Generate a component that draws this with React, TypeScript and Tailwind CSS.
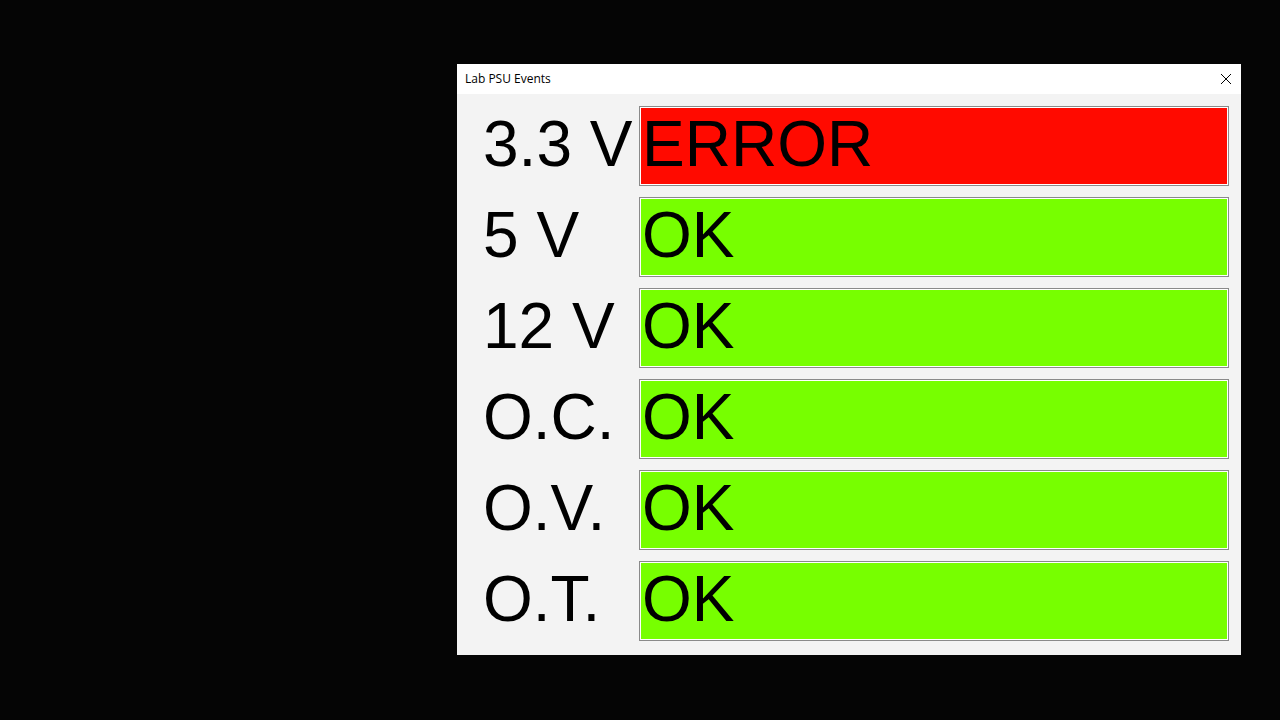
import React from 'react';

const rows = [
    { label: '3.3 V', status: 'ERROR', ok: false },
    { label: '5 V', status: 'OK', ok: true },
    { label: '12 V', status: 'OK', ok: true },
    { label: 'O.C.', status: 'OK', ok: true },
    { label: 'O.V.', status: 'OK', ok: true },
    { label: 'O.T.', status: 'OK', ok: true },
];

export default function App() {
    return (
        <div className="w-[1280px] h-[720px] bg-[#050505] pt-[64px] pl-[457px]">
            <div className="w-[784px] h-[591px] flex flex-col bg-[#f3f3f3]">
                <div className="h-[30px] bg-white flex flex-row items-center pl-[8px] pr-[9px]">
                    <div className="flex-1 text-[12px] text-black font-['Open_Sans',sans-serif]">
                        Lab PSU Events
                    </div>
                    <svg width="12" height="12" viewBox="0 0 12 12">
                        <path d="M1 1 L11 11 M11 1 L1 11" stroke="#000" strokeWidth="1" />
                    </svg>
                </div>
                <div className="flex flex-col gap-[11px] pt-[12px] pl-[26px] pr-[12px]">
                    {rows.map((r) => {
                        return (
                            <div className="flex flex-row h-[80px]" key={r.label}>
                                <div className="w-[156px] flex items-center pb-[5px] text-[64px] leading-none text-black font-['Liberation_Sans',Arial,sans-serif]">
                                    {r.label}
                                </div>
                                <div
                                    className={
                                        'flex-1 flex items-center border border-[#8a8a8a] shadow-[inset_0_0_0_1px_#ffffff] pl-[2px] pb-[5px] text-[64px] leading-none text-black font-[\'Liberation_Sans\',Arial,sans-serif] ' +
                                        (r.ok ? 'bg-[#77ff00]' : 'bg-[#ff0a00]')
                                    }
                                >
                                    {r.status}
                                </div>
                            </div>
                        );
                    })}
                </div>
            </div>
        </div>
    );
}
